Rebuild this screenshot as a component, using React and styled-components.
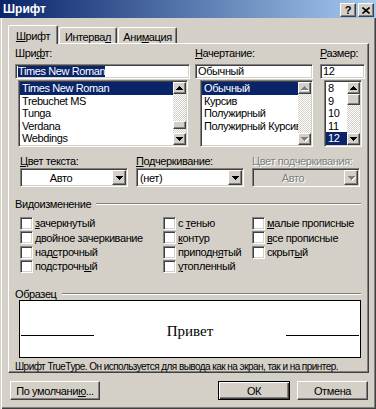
import React from "react";
import styled, { createGlobalStyle, css } from "styled-components";

const FACE = '"Liberation Sans", Arial, sans-serif';
const GRAY = "#d4d0c8";
const NAVY = "#0a246a";

const GlobalStyle = createGlobalStyle`
  * { box-sizing: border-box; }
  html, body { margin: 0; padding: 0; background: ${GRAY}; }
  body { font-family: ${FACE}; font-size: 11px; letter-spacing: -0.4px; color: #000; }
`;

const raised = css`
  border: 1px solid;
  border-color: #fff #404040 #404040 #fff;
  box-shadow: inset -1px -1px 0 #808080;
`;

const sunken = css`
  border: 1px solid;
  border-color: #808080 #fff #fff #808080;
  box-shadow: inset 1px 1px 0 #404040, inset -1px -1px 0 ${GRAY};
`;

const disabledText = css`
  color: #808080;
  text-shadow: 1px 1px 0 #fff;
`;

const Window = styled.div`
  width: 376px;
  height: 409px;
  background: ${GRAY};
  display: flex;
  flex-direction: column;
  box-shadow: inset 1px 0 0 ${GRAY}, inset 2px 0 0 #fff, inset -1px -1px 0 #404040,
    inset -2px -2px 0 #808080;
`;

const TitleBar = styled.div`
  height: 18px;
  flex: none;
  display: flex;
  align-items: flex-end;
  padding: 0 2px 1px 3px;
  background: linear-gradient(to right, ${NAVY}, #a6caf0);
  color: #fff;
  font-weight: bold;
  font-size: 12px;
  letter-spacing: 0;
`;

const TitleText = styled.span`
  flex: 1;
  align-self: center;
`;

const CaptionButton = styled.div`
  width: 16px;
  height: 14px;
  margin-left: ${(p) => p.$gap || 0}px;
  background: ${GRAY};
  ${raised};
  display: flex;
  align-items: center;
  justify-content: center;
  color: #000;
  font-size: 11px;
`;

const Body = styled.div`
  flex: 1;
  display: flex;
  flex-direction: column;
  padding: 7px 7px 0 8px;
`;

const TabStrip = styled.div`
  height: 18px;
  display: flex;
  align-items: flex-end;
  position: relative;
  z-index: 1;
`;

const Tab = styled.div`
  width: ${(p) => p.$w}px;
  height: ${(p) => (p.$active ? 19 : 16)}px;
  margin-left: ${(p) => p.$ml || 0}px;
  margin-bottom: ${(p) => (p.$active ? -1 : 0)}px;
  background: ${GRAY};
  border: 1px solid;
  border-bottom: none;
  border-color: #fff #404040 transparent #fff;
  border-radius: 2px 2px 0 0;
  box-shadow: inset -1px 0 0 #808080;
  display: flex;
  align-items: center;
  justify-content: center;
  padding-top: ${(p) => (p.$active ? 1 : 2)}px;
`;

const Panel = styled.div`
  height: 330px;
  flex: none;
  background: ${GRAY};
  ${raised};
  padding: 3px 0 0 6px;
  display: flex;
  flex-direction: column;
`;

const U = styled.span`
  text-decoration: underline;
`;

const FontRow = styled.div`
  display: flex;
`;

const Column = styled.div`
  width: ${(p) => p.$w}px;
  margin-left: ${(p) => p.$ml || 0}px;
  display: flex;
  flex-direction: column;
`;

const Label = styled.div`
  height: 13px;
  line-height: 13px;
  white-space: nowrap;
  ${(p) => p.$disabled && disabledText};
`;

const Edit = styled.div`
  height: 15px;
  margin-top: 4px;
  background: #fff;
  ${sunken};
  padding: 0 2px;
  line-height: 11px;
  display: flex;
  align-items: center;
  white-space: nowrap;
  overflow: hidden;
`;

const Selected = styled.span`
  background: ${NAVY};
  color: #fff;
`;

const ListBox = styled.div`
  height: 67px;
  margin: 1px ${(p) => p.$mr || 0}px 0 ${(p) => p.$ml || 0}px;
  background: #fff;
  ${sunken};
  padding: 1px;
  display: flex;
  overflow: hidden;
`;

const Items = styled.div`
  flex: 1;
  min-width: 0;
  overflow: hidden;
`;

const Item = styled.div`
  height: 12.6px;
  line-height: 12.6px;
  padding-left: 2px;
  white-space: nowrap;
  overflow: hidden;
  ${(p) =>
    p.$selected &&
    css`
      background: ${NAVY};
      color: #fff;
    `};
`;

const ScrollBar = styled.div`
  width: 13px;
  flex: none;
  display: flex;
  flex-direction: column;
`;

const ArrowButton = styled.div`
  height: 12px;
  flex: none;
  background: ${GRAY};
  ${raised};
  display: flex;
  align-items: center;
  justify-content: center;
`;

const Track = styled.div`
  flex: 1;
  display: flex;
  flex-direction: column;
  background-image: repeating-conic-gradient(#fff 0 25%, ${GRAY} 0 50%);
  background-size: 2px 2px;
`;

const Thumb = styled.div`
  height: ${(p) => p.$h}px;
  margin-top: ${(p) => p.$top}px;
  flex: none;
  background: ${GRAY};
  ${raised};
`;

const UP = "M3 0h1v1h1v1h1v1h1v1H0V3h1V2h1V1h1z";
const DOWN = "M0 0h7v1H6v1H5v1H4v1H3V3H2V2H1V1H0z";

const Arrow = ({ down, disabled }) => (
  <svg width="7" height="4" viewBox="0 0 7 4" style={{ overflow: "visible" }}>
    {disabled && <path transform="translate(1 1)" fill="#fff" d={down ? DOWN : UP} />}
    <path fill={disabled ? "#808080" : "#000"} d={down ? DOWN : UP} />
  </svg>
);

const Scroll = ({ thumb, disabled }) => (
  <ScrollBar>
    <ArrowButton>
      <Arrow disabled={disabled} />
    </ArrowButton>
    <Track>{thumb && <Thumb $top={thumb.top} $h={thumb.h} />}</Track>
    <ArrowButton>
      <Arrow down disabled={disabled} />
    </ArrowButton>
  </ScrollBar>
);

const ComboRow = styled.div`
  display: flex;
  gap: 8px;
  margin-top: 8px;
  padding-left: 5px;
`;

const ComboField = styled.div`
  width: 108px;
  display: flex;
  flex-direction: column;
`;

const Combo = styled.div`
  height: 19px;
  background: ${(p) => (p.$disabled ? GRAY : "#fff")};
  ${sunken};
  padding: 1px;
  display: flex;
`;

const ComboText = styled.div`
  flex: 1;
  display: flex;
  align-items: center;
  justify-content: ${(p) => (p.$center ? "center" : "flex-start")};
  padding: ${(p) => (p.$center ? "0 12px 0 0" : "0 0 0 2px")};
  white-space: nowrap;
  ${(p) => p.$disabled && disabledText};
`;

const DropButton = styled.div`
  width: 14px;
  flex: none;
  background: ${GRAY};
  ${raised};
  display: flex;
  align-items: center;
  justify-content: center;
`;

const Separator = styled.div`
  display: flex;
  align-items: center;
  height: 13px;
  margin-top: ${(p) => p.$mt}px;
  margin-right: 7px;
  white-space: nowrap;

  &::after {
    content: "";
    flex: 1;
    margin-left: 5px;
    border-top: 1px solid #808080;
    border-bottom: 1px solid #fff;
  }
`;

const Checks = styled.div`
  display: grid;
  grid-template-columns: 143px 89px 1fr;
  grid-template-rows: repeat(4, 14.33px);
  grid-auto-flow: column;
  margin-top: 6px;
  padding-left: 5px;
`;

const CheckItem = styled.label`
  display: flex;
  align-items: center;
  gap: 2px;
  white-space: nowrap;
  height: 13px;
`;

const Box = styled.span`
  width: 13px;
  height: 13px;
  flex: none;
  background: #fff;
  ${sunken};
`;

const Preview = styled.div`
  height: 58px;
  margin: 0 7px 0 4px;
  background: #fff;
  border: 1px solid #000;
  padding-top: 21px;
  display: flex;
  align-items: baseline;
`;

const PreviewLine = styled.div`
  width: 73px;
  margin: 0 1px 2px;
  border-top: 1px solid #000;
`;

const PreviewText = styled.div`
  flex: 1;
  text-align: center;
  font: 15px "Liberation Serif", "Times New Roman", serif;
  letter-spacing: 0;
  line-height: 18px;
`;

const Note = styled.div`
  margin-top: 3px;
  font-size: 10px;
  letter-spacing: -0.55px;
  white-space: nowrap;
`;

const ButtonBar = styled.div`
  display: flex;
  margin-top: 8px;
  padding: 0 1px 0 2px;
`;

const Button = styled.div`
  width: ${(p) => p.$w}px;
  height: 19px;
  margin-left: ${(p) => (p.$push ? "auto" : `${p.$ml || 0}px`)};
  background: ${GRAY};
  display: flex;
  align-items: center;
  justify-content: center;
  ${(p) =>
    p.$default
      ? css`
          border: 1px solid #000;
          box-shadow: inset 1px 1px 0 #fff, inset -1px -1px 0 #404040,
            inset -2px -2px 0 #808080;
        `
      : raised};
`;

const fonts = ["Times New Roman", "Trebuchet MS", "Tunga", "Verdana", "Webdings"];
const styles = ["Обычный", "Курсив", "Полужирный", "Полужирный Курсив"];
const sizes = ["8", "9", "10", "11", "12"];

const checks = [
  <><U>з</U>ачеркнутый</>,
  <><U>д</U>войное зачеркивание</>,
  <>над<U>с</U>трочный</>,
  <>подстрочн<U>ы</U>й</>,
  <>с <U>т</U>енью</>,
  <><U>к</U>онтур</>,
  <>приподн<U>я</U>тый</>,
  <><U>у</U>топленный</>,
  <><U>м</U>алые прописные</>,
  <><U>в</U>се прописные</>,
  <>скрыт<U>ы</U>й</>,
];

export default function App() {
  return (
    <>
      <GlobalStyle />
      <Window>
        <TitleBar>
          <TitleText>Шрифт</TitleText>
          <CaptionButton>
            <b>?</b>
          </CaptionButton>
          <CaptionButton $gap={2}>
            <svg width="8" height="7" viewBox="0 0 8 7">
              <path d="M0.5 0.5L7.5 6.5M7.5 0.5L0.5 6.5" stroke="#000" strokeWidth="1.6" />
            </svg>
          </CaptionButton>
        </TitleBar>

        <Body>
          <TabStrip>
            <Tab $w={50} $active>
              <span><U>Ш</U>рифт</span>
            </Tab>
            <Tab $w={58} $ml={1}>
              <span>Интерва<U>л</U></span>
            </Tab>
            <Tab $w={59} $ml={1}>
              <span>Ани<U>м</U>ация</span>
            </Tab>
          </TabStrip>

          <Panel>
            <FontRow>
              <Column $w={175}>
                <Label>Шри<U>ф</U>т:</Label>
                <Edit>
                  <Selected>Times New Roman</Selected>
                </Edit>
                <ListBox $ml={3} $mr={2}>
                  <Items>
                    {fonts.map((f, i) => (
                      <Item key={f} $selected={i === 0}>{f}</Item>
                    ))}
                  </Items>
                  <Scroll thumb={{ top: 27, h: 8 }} />
                </ListBox>
              </Column>
              <Column $w={118} $ml={5}>
                <Label><U>Н</U>ачертание:</Label>
                <Edit>Обычный</Edit>
                <ListBox $ml={5}>
                  <Items>
                    {styles.map((s, i) => (
                      <Item key={s} $selected={i === 0}>{s}</Item>
                    ))}
                  </Items>
                  <Scroll disabled />
                </ListBox>
              </Column>
              <Column $w={45} $ml={7}>
                <Label><U>Р</U>азмер:</Label>
                <Edit>12</Edit>
                <ListBox $ml={4} $mr={3}>
                  <Items>
                    {sizes.map((s, i) => (
                      <Item key={s} $selected={i === 4}>{s}</Item>
                    ))}
                  </Items>
                  <Scroll thumb={{ top: 0, h: 11 }} />
                </ListBox>
              </Column>
            </FontRow>

            <ComboRow>
              <ComboField>
                <Label><U>Ц</U>вет текста:</Label>
                <Combo>
                  <ComboText $center>Авто</ComboText>
                  <DropButton><Arrow down /></DropButton>
                </Combo>
              </ComboField>
              <ComboField>
                <Label><U>П</U>одчеркивание:</Label>
                <Combo>
                  <ComboText>(нет)</ComboText>
                  <DropButton><Arrow down /></DropButton>
                </Combo>
              </ComboField>
              <ComboField>
                <Label $disabled>Цвет подчеркивания:</Label>
                <Combo $disabled>
                  <ComboText $center $disabled>Авто</ComboText>
                  <DropButton><Arrow down disabled /></DropButton>
                </Combo>
              </ComboField>
            </ComboRow>

            <Separator $mt={11}>Видоизменение</Separator>
            <Checks>
              {checks.map((text, i) => (
                <CheckItem key={i}>
                  <Box />
                  <span>{text}</span>
                </CheckItem>
              ))}
            </Checks>

            <Separator $mt={13}>Образец</Separator>
            <Preview>
              <PreviewLine />
              <PreviewText>Привет</PreviewText>
              <PreviewLine />
            </Preview>
            <Note>
              Шрифт TrueType. Он используется для вывода как на экран, так и на принтер.
            </Note>
          </Panel>

          <ButtonBar>
            <Button $w={90}>По умолчани<U>ю</U>...</Button>
            <Button $w={72} $push $default>ОК</Button>
            <Button $w={71} $ml={7}>Отмена</Button>
          </ButtonBar>
        </Body>
      </Window>
    </>
  );
}
